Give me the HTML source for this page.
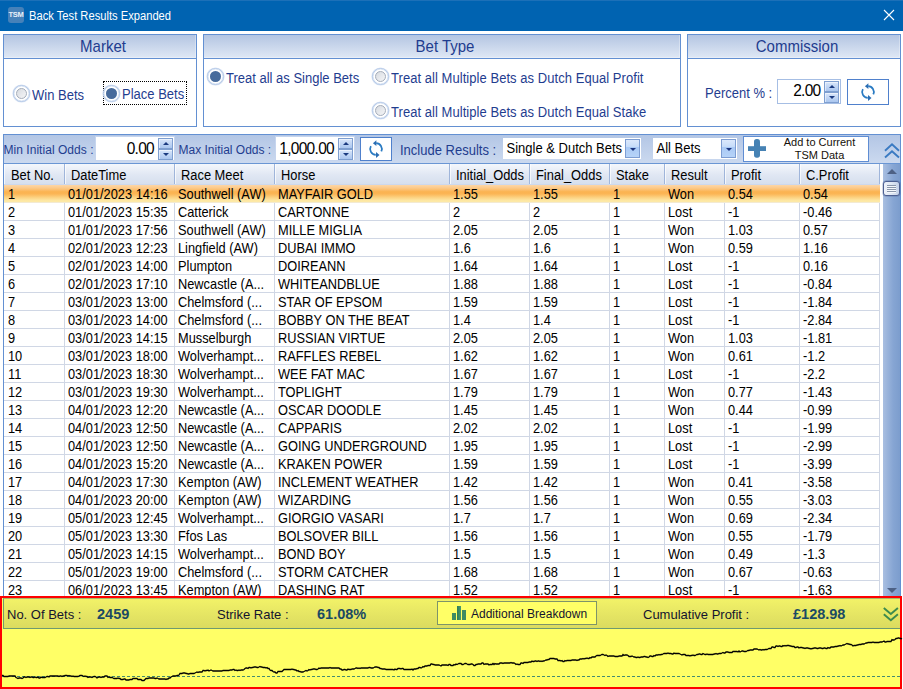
<!DOCTYPE html><html><head><meta charset="utf-8"><title>Back Test Results Expanded</title><style>
*{box-sizing:border-box;margin:0;padding:0}
html,body{width:903px;height:689px;overflow:hidden;background:#fff}
body{position:relative;font-family:"Liberation Sans",Arial,sans-serif;font-size:13px;color:#000}
.abs{position:absolute}
.t{position:absolute;white-space:nowrap;line-height:1}
#title{left:0;top:0;width:903px;height:31px;background:#0063b1}
#title .hl{left:0;top:0;width:903px;height:1px;background:#1c70b8}
#ico{left:8px;top:7px;width:16px;height:16px;border-radius:3px;background:#4681b9}
#ico span{left:0;top:4px;width:16px;text-align:center;font-size:7.5px;font-weight:bold;color:#e6eff8;letter-spacing:-0.35px}
.panel{position:absolute;border:1px solid #6390d2;background:#fff}
.ph{position:absolute;left:0;top:0;right:0;height:24px;border-bottom:1px solid #6390d2;background:linear-gradient(#b4c5e2,#dfe8f5);box-shadow:inset -1px -1px 0 rgba(255,255,255,.3)}
.ph span{transform:scaleY(1.06);transform-origin:0 82%;position:absolute;left:6px;right:0;top:4px;text-align:center;font-size:15px;line-height:16px;color:#1f3d8f;white-space:nowrap}
.blue{color:#1f3d8f}
.radio{position:absolute;width:17px;height:17px;border-radius:50%;border:1px solid #b4c9e8;background:#fff;box-shadow:0 0 0 .6px rgba(180,201,232,.55),inset 0 0 0 .6px rgba(180,201,232,.45)}
.radio i{position:absolute;left:2px;top:2px;width:11px;height:11px;border-radius:50%;border:1px solid #a4acb9;background:linear-gradient(135deg,#d6dae0,#e6e8ec 50%,#f4f5f6)}
.radio.on i{border-color:#e4e9f2;background:#fff}
.radio.on b{position:absolute;left:2px;top:2px;width:11px;height:11px;border-radius:50%;background:#476b9c}
.spin{position:absolute;background:#fff;border:1px solid #a6bee4}
.spin .v{position:absolute;right:19.5px;top:0;bottom:1px;display:flex;align-items:center;font-size:15.5px;letter-spacing:-0.7px;white-space:nowrap;transform:scaleY(1.06)}
.spin.tb .v{top:1px;bottom:0;right:20px}
.sb{position:absolute;width:15px;height:11px;border:1px solid #7f9fd0;background:linear-gradient(#d9e6fa,#aac6ef);box-shadow:inset 1px 1px 0 rgba(255,255,255,.5)}
.sb:after{content:"";position:absolute;left:3.5px;top:3px;border-left:3px solid transparent;border-right:3px solid transparent}
.sb.up:after{border-bottom:3px solid #1a3a80}
.sb.dn:after{border-top:3px solid #1a3a80}
.btn{position:absolute;background:#fff;border:1px solid #4f80cc}
.g{transform:scaleY(1.07);transform-origin:0 81%}
#tool{left:3px;top:134px;width:898px;height:463px;border:1px solid #6390d2;border-bottom:none;background:#fff}
#toolbg{left:0;top:0;width:896px;height:29px;background:linear-gradient(#b3c6e5,#cbd9ef);border-bottom:1px solid #6a96d4}
.combo{position:absolute;background:#fff;height:21px;top:3px}
.combo span{transform:scaleY(1.08);transform-origin:0 81%;position:absolute;left:3.5px;top:4px;font-size:13px;line-height:14px;white-space:nowrap}
.cb{position:absolute;right:1px;top:1px;width:15px;height:19px;border:1px solid #7d9dd2;background:linear-gradient(#dbe8fc 0%,#c6dcf9 40%,#a9c9f5 42%,#b6d3f8 100%)}
.cb:after{content:"";position:absolute;left:3.5px;top:8px;border-left:3px solid transparent;border-right:3px solid transparent;border-top:3.4px solid #1a3580}
#ghead{left:0;top:29px;width:876px;height:21px;background:linear-gradient(#f4f7fc,#e0e7f3 55%,#d6dfee);border-bottom:1px solid #cdd8ec}
.hc{position:absolute;top:0;height:20px;border-right:1px solid #9fb5da;box-shadow:inset 1px 0 0 rgba(255,255,255,.7)}
.hc span{transform:scale(.99,1.08);transform-origin:0 81%;position:absolute;left:5.5px;top:3.75px;font-size:13px;line-height:15px;white-space:nowrap}
.row{position:absolute;left:0;width:876px;height:18px;border-bottom:1px solid #d0d7e5;background:#fff}
.row.sel{background:linear-gradient(#fcd6a7 0%,#fcc988 18%,#fbb351 40%,#fbb555 52%,#fcd07f 72%,#fde6a2 90%,#fdeaa8 100%);height:17px;border-bottom:none;box-shadow:0 1px 0 #f3ead2}
.c{position:absolute;top:0;height:17px;border-right:1px solid #d0d7e5;overflow:hidden}
.row.sel .c{border-right-color:transparent}
.c span{transform:scale(.985,1.09);transform-origin:0 81%;position:absolute;left:3px;top:2.5px;font-size:13px;line-height:14px;white-space:nowrap}
#scroll{left:879px;top:29px;width:17px;height:434px;background:linear-gradient(90deg,#a9bfe1,#86a5d3 60%,#7c9dcd)}
#bot{left:0;top:596px;width:902px;height:93px;border:2px solid #f00;background:#ff6}
#bar{left:1px;top:0;width:897px;height:31px;border:1px solid #6f9a70;border-top-color:#a9b868;border-right:none;background:linear-gradient(#f2f268,#e6e664 50%,#dbdb5f)}
#bar .t{font-size:13px;color:#14142e}
#bar .b{font-weight:bold;font-size:14.5px;color:#1b4a63}
</style></head><body>
<div id="title" class="abs"><div class="abs hl"></div><div id="ico" class="abs"><span class="t">TSM</span></div><span class="t" id="ttxt" style="left:29px;top:9px;font-size:12.5px;line-height:14px;color:#fff;transform:scaleX(.894);transform-origin:0 0">Back Test Results Expanded</span><svg class="abs" style="left:883px;top:9px" width="12" height="12" viewBox="0 0 12 12"><path d="M1 1L11 11M11 1L1 11" stroke="#fff" stroke-width="1.1" fill="none"/></svg></div>
<div class="panel" style="left:3px;top:34px;width:194px;height:93px"><div class="ph"><span>Market</span></div>
<div class="radio" style="left:9px;top:50px"><i></i></div>
<span class="t blue g" id="win" style="left:28px;top:53px;font-size:13px;line-height:15px">Win Bets</span>
<div class="abs" style="left:99px;top:46px;width:84px;height:24px;border:1px dotted #000"></div>
<div class="radio on" style="left:99px;top:50px"><i></i><b></b></div>
<span class="t blue g" id="place" style="left:118px;top:52px;font-size:13px;line-height:15px">Place Bets</span>
</div>
<div class="panel" style="left:203px;top:34px;width:478px;height:93px"><div class="ph"><span>Bet Type</span></div>
<div class="radio on" style="left:3px;top:33px"><i></i><b></b></div>
<span class="t blue g" id="bt1" style="left:22px;top:36px;font-size:13px;line-height:15px">Treat all as Single Bets</span>
<div class="radio" style="left:168px;top:33px"><i></i></div>
<span class="t blue g" id="bt2" style="letter-spacing:0.05px;left:187px;top:36px;font-size:13px;line-height:15px">Treat all Multiple Bets as Dutch Equal Profit</span>
<div class="radio" style="left:168px;top:67px"><i></i></div>
<span class="t blue g" id="bt3" style="letter-spacing:0.05px;left:187px;top:70px;font-size:13px;line-height:15px">Treat all Multiple Bets as Dutch Equal Stake</span>
</div>
<div class="panel" style="left:687px;top:34px;width:214px;height:93px"><div class="ph"><span>Commission</span></div>
<span class="t blue g" id="pct" style="left:17px;top:51px;font-size:13px;line-height:15px">Percent % :</span>
<div class="spin" style="left:89px;top:44px;width:64px;height:25px"><span class="v" id="v200">2.00</span><div class="sb up" style="left:46px;top:1px"></div><div class="sb dn" style="left:46px;top:12px"></div></div>
<div class="btn" style="left:159px;top:44px;width:42px;height:26px"><svg class="abs" style="left:10.9px;top:2px" width="18" height="20" viewBox="-9 -10 18 20"><path d="M0.2 -5.85A5.85 5.85 0 0 1 5.3 2.47" fill="none" stroke="#2a7bc3" stroke-width="1.75"/><path d="M-3.1 -5.75L0.4 -8.8L0.4 -3.0Z" fill="#2a6db3"/><path d="M-5.12 -2.84A5.85 5.85 0 0 0 -0.2 5.85" fill="none" stroke="#2a7bc3" stroke-width="1.75"/><path d="M3.5 5.9L0 3.0L0 8.9Z" fill="#2a6db3"/></svg></div>
</div>
<div id="tool" class="abs"><div id="toolbg" class="abs"></div>
<span class="t blue g" id="minl" style="left:-0.5px;top:7.6px;font-size:12px;line-height:14px;letter-spacing:0.04px">Min Initial Odds :</span>
<div class="spin tb" style="left:91px;top:1px;width:80px;height:25px;border-color:#c6d5ee"><span class="v" id="v000">0.00</span><div class="sb up" style="left:62px;top:1px"></div><div class="sb dn" style="left:62px;top:12px"></div></div>
<span class="t blue g" id="maxl" style="left:174.5px;top:7.6px;font-size:12px;line-height:14px">Max Initial Odds :</span>
<div class="spin tb" style="left:271px;top:1px;width:80px;height:25px;border-color:#c6d5ee"><span class="v" id="v1000">1,000.00</span><div class="sb up" style="left:62px;top:1px"></div><div class="sb dn" style="left:62px;top:12px"></div></div>
<div class="btn" style="left:356px;top:2px;width:32px;height:24px"><svg class="abs" style="left:6.15px;top:1.06px" width="18" height="20" viewBox="-9 -10 18 20"><path d="M0.2 -5.85A5.85 5.85 0 0 1 5.3 2.47" fill="none" stroke="#2a7bc3" stroke-width="1.75"/><path d="M-3.1 -5.75L0.4 -8.8L0.4 -3.0Z" fill="#2a6db3"/><path d="M-5.12 -2.84A5.85 5.85 0 0 0 -0.2 5.85" fill="none" stroke="#2a7bc3" stroke-width="1.75"/><path d="M3.5 5.9L0 3.0L0 8.9Z" fill="#2a6db3"/></svg></div>
<span class="t blue g" id="incl" style="left:396px;top:8px;font-size:13px;line-height:15px">Include Results :</span>
<div class="combo" style="left:499px;width:138px"><span id="cb1">Single &amp; Dutch Bets</span><div class="cb"></div></div>
<div class="combo" style="left:649px;width:84px"><span id="cb2">All Bets</span><div class="cb"></div></div>
<div class="btn" style="left:739px;top:1px;width:126px;height:26px;box-shadow:none;border-color:#5f8dd3"><svg class="abs" style="left:0;top:0" width="26" height="24" viewBox="0 0 26 24"><rect x="10" y="2.1" width="6" height="18.6" rx="2.6" fill="#4682b4"/><rect x="4" y="9.2" width="18" height="4.8" fill="#4682b4"/></svg><span class="t" id="add1" style="left:26.5px;width:98px;text-align:center;top:-1.1px;font-size:11px;line-height:12px;color:#15100a">Add to Current</span><span class="t" id="add2" style="left:26.5px;width:98px;text-align:center;top:11.7px;font-size:11px;line-height:12px;color:#15100a">TSM Data</span></div>
<svg class="abs" style="left:879px;top:7px" width="18" height="17" viewBox="0 0 18 17"><path d="M2 8.7L9 2.4L16 8.7M2 15.5L9 9.2L16 15.5" fill="none" stroke="#3a7ac2" stroke-width="1.9"/></svg>
<div id="ghead" class="abs">
<div class="hc" style="left:0px;width:61px"><span style="left:7px">Bet No.</span></div>
<div class="hc" style="left:61px;width:110px"><span>DateTime</span></div>
<div class="hc" style="left:171px;width:100px"><span>Race Meet</span></div>
<div class="hc" style="left:271px;width:175px"><span>Horse</span></div>
<div class="hc" style="left:446px;width:80px"><span>Initial_Odds</span></div>
<div class="hc" style="left:526px;width:80px"><span>Final_Odds</span></div>
<div class="hc" style="left:606px;width:55px"><span>Stake</span></div>
<div class="hc" style="left:661px;width:60px"><span>Result</span></div>
<div class="hc" style="left:721px;width:75px"><span>Profit</span></div>
<div class="hc" style="left:796px;width:80px"><span>C.Profit</span></div>
</div>
<div class="row sel" style="top:50px">
<div class="c" style="left:0px;width:61px"><span style="left:3.6px">1</span></div>
<div class="c" style="left:61px;width:110px"><span>01/01/2023 14:16</span></div>
<div class="c" style="left:171px;width:100px"><span>Southwell (AW)</span></div>
<div class="c" style="left:271px;width:175px"><span>MAYFAIR GOLD</span></div>
<div class="c" style="left:446px;width:80px"><span>1.55</span></div>
<div class="c" style="left:526px;width:80px"><span>1.55</span></div>
<div class="c" style="left:606px;width:55px"><span>1</span></div>
<div class="c" style="left:661px;width:60px"><span>Won</span></div>
<div class="c" style="left:721px;width:75px"><span>0.54</span></div>
<div class="c" style="left:796px;width:80px"><span>0.54</span></div>
</div>
<div class="row" style="top:68px">
<div class="c" style="left:0px;width:61px"><span style="left:3.6px">2</span></div>
<div class="c" style="left:61px;width:110px"><span>01/01/2023 15:35</span></div>
<div class="c" style="left:171px;width:100px"><span>Catterick</span></div>
<div class="c" style="left:271px;width:175px"><span>CARTONNE</span></div>
<div class="c" style="left:446px;width:80px"><span>2</span></div>
<div class="c" style="left:526px;width:80px"><span>2</span></div>
<div class="c" style="left:606px;width:55px"><span>1</span></div>
<div class="c" style="left:661px;width:60px"><span>Lost</span></div>
<div class="c" style="left:721px;width:75px"><span>-1</span></div>
<div class="c" style="left:796px;width:80px"><span>-0.46</span></div>
</div>
<div class="row" style="top:86px">
<div class="c" style="left:0px;width:61px"><span style="left:3.6px">3</span></div>
<div class="c" style="left:61px;width:110px"><span>01/01/2023 17:56</span></div>
<div class="c" style="left:171px;width:100px"><span>Southwell (AW)</span></div>
<div class="c" style="left:271px;width:175px"><span>MILLE MIGLIA</span></div>
<div class="c" style="left:446px;width:80px"><span>2.05</span></div>
<div class="c" style="left:526px;width:80px"><span>2.05</span></div>
<div class="c" style="left:606px;width:55px"><span>1</span></div>
<div class="c" style="left:661px;width:60px"><span>Won</span></div>
<div class="c" style="left:721px;width:75px"><span>1.03</span></div>
<div class="c" style="left:796px;width:80px"><span>0.57</span></div>
</div>
<div class="row" style="top:104px">
<div class="c" style="left:0px;width:61px"><span style="left:3.6px">4</span></div>
<div class="c" style="left:61px;width:110px"><span>02/01/2023 12:23</span></div>
<div class="c" style="left:171px;width:100px"><span>Lingfield (AW)</span></div>
<div class="c" style="left:271px;width:175px"><span>DUBAI IMMO</span></div>
<div class="c" style="left:446px;width:80px"><span>1.6</span></div>
<div class="c" style="left:526px;width:80px"><span>1.6</span></div>
<div class="c" style="left:606px;width:55px"><span>1</span></div>
<div class="c" style="left:661px;width:60px"><span>Won</span></div>
<div class="c" style="left:721px;width:75px"><span>0.59</span></div>
<div class="c" style="left:796px;width:80px"><span>1.16</span></div>
</div>
<div class="row" style="top:122px">
<div class="c" style="left:0px;width:61px"><span style="left:3.6px">5</span></div>
<div class="c" style="left:61px;width:110px"><span>02/01/2023 14:00</span></div>
<div class="c" style="left:171px;width:100px"><span>Plumpton</span></div>
<div class="c" style="left:271px;width:175px"><span>DOIREANN</span></div>
<div class="c" style="left:446px;width:80px"><span>1.64</span></div>
<div class="c" style="left:526px;width:80px"><span>1.64</span></div>
<div class="c" style="left:606px;width:55px"><span>1</span></div>
<div class="c" style="left:661px;width:60px"><span>Lost</span></div>
<div class="c" style="left:721px;width:75px"><span>-1</span></div>
<div class="c" style="left:796px;width:80px"><span>0.16</span></div>
</div>
<div class="row" style="top:140px">
<div class="c" style="left:0px;width:61px"><span style="left:3.6px">6</span></div>
<div class="c" style="left:61px;width:110px"><span>02/01/2023 17:10</span></div>
<div class="c" style="left:171px;width:100px"><span>Newcastle (A...</span></div>
<div class="c" style="left:271px;width:175px"><span>WHITEANDBLUE</span></div>
<div class="c" style="left:446px;width:80px"><span>1.88</span></div>
<div class="c" style="left:526px;width:80px"><span>1.88</span></div>
<div class="c" style="left:606px;width:55px"><span>1</span></div>
<div class="c" style="left:661px;width:60px"><span>Lost</span></div>
<div class="c" style="left:721px;width:75px"><span>-1</span></div>
<div class="c" style="left:796px;width:80px"><span>-0.84</span></div>
</div>
<div class="row" style="top:158px">
<div class="c" style="left:0px;width:61px"><span style="left:3.6px">7</span></div>
<div class="c" style="left:61px;width:110px"><span>03/01/2023 13:00</span></div>
<div class="c" style="left:171px;width:100px"><span>Chelmsford (...</span></div>
<div class="c" style="left:271px;width:175px"><span>STAR OF EPSOM</span></div>
<div class="c" style="left:446px;width:80px"><span>1.59</span></div>
<div class="c" style="left:526px;width:80px"><span>1.59</span></div>
<div class="c" style="left:606px;width:55px"><span>1</span></div>
<div class="c" style="left:661px;width:60px"><span>Lost</span></div>
<div class="c" style="left:721px;width:75px"><span>-1</span></div>
<div class="c" style="left:796px;width:80px"><span>-1.84</span></div>
</div>
<div class="row" style="top:176px">
<div class="c" style="left:0px;width:61px"><span style="left:3.6px">8</span></div>
<div class="c" style="left:61px;width:110px"><span>03/01/2023 14:00</span></div>
<div class="c" style="left:171px;width:100px"><span>Chelmsford (...</span></div>
<div class="c" style="left:271px;width:175px"><span>BOBBY ON THE BEAT</span></div>
<div class="c" style="left:446px;width:80px"><span>1.4</span></div>
<div class="c" style="left:526px;width:80px"><span>1.4</span></div>
<div class="c" style="left:606px;width:55px"><span>1</span></div>
<div class="c" style="left:661px;width:60px"><span>Lost</span></div>
<div class="c" style="left:721px;width:75px"><span>-1</span></div>
<div class="c" style="left:796px;width:80px"><span>-2.84</span></div>
</div>
<div class="row" style="top:194px">
<div class="c" style="left:0px;width:61px"><span style="left:3.6px">9</span></div>
<div class="c" style="left:61px;width:110px"><span>03/01/2023 14:15</span></div>
<div class="c" style="left:171px;width:100px"><span>Musselburgh</span></div>
<div class="c" style="left:271px;width:175px"><span>RUSSIAN VIRTUE</span></div>
<div class="c" style="left:446px;width:80px"><span>2.05</span></div>
<div class="c" style="left:526px;width:80px"><span>2.05</span></div>
<div class="c" style="left:606px;width:55px"><span>1</span></div>
<div class="c" style="left:661px;width:60px"><span>Won</span></div>
<div class="c" style="left:721px;width:75px"><span>1.03</span></div>
<div class="c" style="left:796px;width:80px"><span>-1.81</span></div>
</div>
<div class="row" style="top:212px">
<div class="c" style="left:0px;width:61px"><span style="left:3.6px">10</span></div>
<div class="c" style="left:61px;width:110px"><span>03/01/2023 18:00</span></div>
<div class="c" style="left:171px;width:100px"><span>Wolverhampt...</span></div>
<div class="c" style="left:271px;width:175px"><span>RAFFLES REBEL</span></div>
<div class="c" style="left:446px;width:80px"><span>1.62</span></div>
<div class="c" style="left:526px;width:80px"><span>1.62</span></div>
<div class="c" style="left:606px;width:55px"><span>1</span></div>
<div class="c" style="left:661px;width:60px"><span>Won</span></div>
<div class="c" style="left:721px;width:75px"><span>0.61</span></div>
<div class="c" style="left:796px;width:80px"><span>-1.2</span></div>
</div>
<div class="row" style="top:230px">
<div class="c" style="left:0px;width:61px"><span style="left:3.6px">11</span></div>
<div class="c" style="left:61px;width:110px"><span>03/01/2023 18:30</span></div>
<div class="c" style="left:171px;width:100px"><span>Wolverhampt...</span></div>
<div class="c" style="left:271px;width:175px"><span>WEE FAT MAC</span></div>
<div class="c" style="left:446px;width:80px"><span>1.67</span></div>
<div class="c" style="left:526px;width:80px"><span>1.67</span></div>
<div class="c" style="left:606px;width:55px"><span>1</span></div>
<div class="c" style="left:661px;width:60px"><span>Lost</span></div>
<div class="c" style="left:721px;width:75px"><span>-1</span></div>
<div class="c" style="left:796px;width:80px"><span>-2.2</span></div>
</div>
<div class="row" style="top:248px">
<div class="c" style="left:0px;width:61px"><span style="left:3.6px">12</span></div>
<div class="c" style="left:61px;width:110px"><span>03/01/2023 19:30</span></div>
<div class="c" style="left:171px;width:100px"><span>Wolverhampt...</span></div>
<div class="c" style="left:271px;width:175px"><span>TOPLIGHT</span></div>
<div class="c" style="left:446px;width:80px"><span>1.79</span></div>
<div class="c" style="left:526px;width:80px"><span>1.79</span></div>
<div class="c" style="left:606px;width:55px"><span>1</span></div>
<div class="c" style="left:661px;width:60px"><span>Won</span></div>
<div class="c" style="left:721px;width:75px"><span>0.77</span></div>
<div class="c" style="left:796px;width:80px"><span>-1.43</span></div>
</div>
<div class="row" style="top:266px">
<div class="c" style="left:0px;width:61px"><span style="left:3.6px">13</span></div>
<div class="c" style="left:61px;width:110px"><span>04/01/2023 12:20</span></div>
<div class="c" style="left:171px;width:100px"><span>Newcastle (A...</span></div>
<div class="c" style="left:271px;width:175px"><span>OSCAR DOODLE</span></div>
<div class="c" style="left:446px;width:80px"><span>1.45</span></div>
<div class="c" style="left:526px;width:80px"><span>1.45</span></div>
<div class="c" style="left:606px;width:55px"><span>1</span></div>
<div class="c" style="left:661px;width:60px"><span>Won</span></div>
<div class="c" style="left:721px;width:75px"><span>0.44</span></div>
<div class="c" style="left:796px;width:80px"><span>-0.99</span></div>
</div>
<div class="row" style="top:284px">
<div class="c" style="left:0px;width:61px"><span style="left:3.6px">14</span></div>
<div class="c" style="left:61px;width:110px"><span>04/01/2023 12:50</span></div>
<div class="c" style="left:171px;width:100px"><span>Newcastle (A...</span></div>
<div class="c" style="left:271px;width:175px"><span>CAPPARIS</span></div>
<div class="c" style="left:446px;width:80px"><span>2.02</span></div>
<div class="c" style="left:526px;width:80px"><span>2.02</span></div>
<div class="c" style="left:606px;width:55px"><span>1</span></div>
<div class="c" style="left:661px;width:60px"><span>Lost</span></div>
<div class="c" style="left:721px;width:75px"><span>-1</span></div>
<div class="c" style="left:796px;width:80px"><span>-1.99</span></div>
</div>
<div class="row" style="top:302px">
<div class="c" style="left:0px;width:61px"><span style="left:3.6px">15</span></div>
<div class="c" style="left:61px;width:110px"><span>04/01/2023 12:50</span></div>
<div class="c" style="left:171px;width:100px"><span>Newcastle (A...</span></div>
<div class="c" style="left:271px;width:175px"><span>GOING UNDERGROUND</span></div>
<div class="c" style="left:446px;width:80px"><span>1.95</span></div>
<div class="c" style="left:526px;width:80px"><span>1.95</span></div>
<div class="c" style="left:606px;width:55px"><span>1</span></div>
<div class="c" style="left:661px;width:60px"><span>Lost</span></div>
<div class="c" style="left:721px;width:75px"><span>-1</span></div>
<div class="c" style="left:796px;width:80px"><span>-2.99</span></div>
</div>
<div class="row" style="top:320px">
<div class="c" style="left:0px;width:61px"><span style="left:3.6px">16</span></div>
<div class="c" style="left:61px;width:110px"><span>04/01/2023 15:20</span></div>
<div class="c" style="left:171px;width:100px"><span>Newcastle (A...</span></div>
<div class="c" style="left:271px;width:175px"><span>KRAKEN POWER</span></div>
<div class="c" style="left:446px;width:80px"><span>1.59</span></div>
<div class="c" style="left:526px;width:80px"><span>1.59</span></div>
<div class="c" style="left:606px;width:55px"><span>1</span></div>
<div class="c" style="left:661px;width:60px"><span>Lost</span></div>
<div class="c" style="left:721px;width:75px"><span>-1</span></div>
<div class="c" style="left:796px;width:80px"><span>-3.99</span></div>
</div>
<div class="row" style="top:338px">
<div class="c" style="left:0px;width:61px"><span style="left:3.6px">17</span></div>
<div class="c" style="left:61px;width:110px"><span>04/01/2023 17:30</span></div>
<div class="c" style="left:171px;width:100px"><span>Kempton (AW)</span></div>
<div class="c" style="left:271px;width:175px"><span>INCLEMENT WEATHER</span></div>
<div class="c" style="left:446px;width:80px"><span>1.42</span></div>
<div class="c" style="left:526px;width:80px"><span>1.42</span></div>
<div class="c" style="left:606px;width:55px"><span>1</span></div>
<div class="c" style="left:661px;width:60px"><span>Won</span></div>
<div class="c" style="left:721px;width:75px"><span>0.41</span></div>
<div class="c" style="left:796px;width:80px"><span>-3.58</span></div>
</div>
<div class="row" style="top:356px">
<div class="c" style="left:0px;width:61px"><span style="left:3.6px">18</span></div>
<div class="c" style="left:61px;width:110px"><span>04/01/2023 20:00</span></div>
<div class="c" style="left:171px;width:100px"><span>Kempton (AW)</span></div>
<div class="c" style="left:271px;width:175px"><span>WIZARDING</span></div>
<div class="c" style="left:446px;width:80px"><span>1.56</span></div>
<div class="c" style="left:526px;width:80px"><span>1.56</span></div>
<div class="c" style="left:606px;width:55px"><span>1</span></div>
<div class="c" style="left:661px;width:60px"><span>Won</span></div>
<div class="c" style="left:721px;width:75px"><span>0.55</span></div>
<div class="c" style="left:796px;width:80px"><span>-3.03</span></div>
</div>
<div class="row" style="top:374px">
<div class="c" style="left:0px;width:61px"><span style="left:3.6px">19</span></div>
<div class="c" style="left:61px;width:110px"><span>05/01/2023 12:45</span></div>
<div class="c" style="left:171px;width:100px"><span>Wolverhampt...</span></div>
<div class="c" style="left:271px;width:175px"><span>GIORGIO VASARI</span></div>
<div class="c" style="left:446px;width:80px"><span>1.7</span></div>
<div class="c" style="left:526px;width:80px"><span>1.7</span></div>
<div class="c" style="left:606px;width:55px"><span>1</span></div>
<div class="c" style="left:661px;width:60px"><span>Won</span></div>
<div class="c" style="left:721px;width:75px"><span>0.69</span></div>
<div class="c" style="left:796px;width:80px"><span>-2.34</span></div>
</div>
<div class="row" style="top:392px">
<div class="c" style="left:0px;width:61px"><span style="left:3.6px">20</span></div>
<div class="c" style="left:61px;width:110px"><span>05/01/2023 13:30</span></div>
<div class="c" style="left:171px;width:100px"><span>Ffos Las</span></div>
<div class="c" style="left:271px;width:175px"><span>BOLSOVER BILL</span></div>
<div class="c" style="left:446px;width:80px"><span>1.56</span></div>
<div class="c" style="left:526px;width:80px"><span>1.56</span></div>
<div class="c" style="left:606px;width:55px"><span>1</span></div>
<div class="c" style="left:661px;width:60px"><span>Won</span></div>
<div class="c" style="left:721px;width:75px"><span>0.55</span></div>
<div class="c" style="left:796px;width:80px"><span>-1.79</span></div>
</div>
<div class="row" style="top:410px">
<div class="c" style="left:0px;width:61px"><span style="left:3.6px">21</span></div>
<div class="c" style="left:61px;width:110px"><span>05/01/2023 14:15</span></div>
<div class="c" style="left:171px;width:100px"><span>Wolverhampt...</span></div>
<div class="c" style="left:271px;width:175px"><span>BOND BOY</span></div>
<div class="c" style="left:446px;width:80px"><span>1.5</span></div>
<div class="c" style="left:526px;width:80px"><span>1.5</span></div>
<div class="c" style="left:606px;width:55px"><span>1</span></div>
<div class="c" style="left:661px;width:60px"><span>Won</span></div>
<div class="c" style="left:721px;width:75px"><span>0.49</span></div>
<div class="c" style="left:796px;width:80px"><span>-1.3</span></div>
</div>
<div class="row" style="top:428px">
<div class="c" style="left:0px;width:61px"><span style="left:3.6px">22</span></div>
<div class="c" style="left:61px;width:110px"><span>05/01/2023 19:00</span></div>
<div class="c" style="left:171px;width:100px"><span>Chelmsford (...</span></div>
<div class="c" style="left:271px;width:175px"><span>STORM CATCHER</span></div>
<div class="c" style="left:446px;width:80px"><span>1.68</span></div>
<div class="c" style="left:526px;width:80px"><span>1.68</span></div>
<div class="c" style="left:606px;width:55px"><span>1</span></div>
<div class="c" style="left:661px;width:60px"><span>Won</span></div>
<div class="c" style="left:721px;width:75px"><span>0.67</span></div>
<div class="c" style="left:796px;width:80px"><span>-0.63</span></div>
</div>
<div class="row" style="top:446px">
<div class="c" style="left:0px;width:61px"><span style="left:3.6px">23</span></div>
<div class="c" style="left:61px;width:110px"><span>06/01/2023 13:45</span></div>
<div class="c" style="left:171px;width:100px"><span>Kempton (AW)</span></div>
<div class="c" style="left:271px;width:175px"><span>DASHING RAT</span></div>
<div class="c" style="left:446px;width:80px"><span>1.52</span></div>
<div class="c" style="left:526px;width:80px"><span>1.52</span></div>
<div class="c" style="left:606px;width:55px"><span>1</span></div>
<div class="c" style="left:661px;width:60px"><span>Lost</span></div>
<div class="c" style="left:721px;width:75px"><span>-1</span></div>
<div class="c" style="left:796px;width:80px"><span>-1.63</span></div>
</div>
<div id="scroll" class="abs"><svg class="abs" style="left:4px;top:5px" width="10" height="5" viewBox="0 0 10 5"><path d="M0 5L5 0L10 5Z" fill="#4d6185"/></svg><div class="abs" style="left:0px;top:17px;width:17px;height:15px;border:1px solid #4c5f92;border-radius:3px;box-shadow:0 0 0 .5px rgba(76,95,146,.5);background:linear-gradient(90deg,#eef2fa,#dfe7f3 50%,#c4d1e8)"><div class="abs" style="left:3px;top:3px;width:9px;height:1px;background:#8a96ab;box-shadow:0 1px 0 #f4f7fb,0 2px 0 #8a96ab,0 3px 0 #f4f7fb,0 4px 0 #8a96ab,0 5px 0 #f4f7fb,0 6px 0 #8a96ab,0 7px 0 #f4f7fb"></div></div><svg class="abs" style="left:4px;top:424px" width="10" height="5" viewBox="0 0 10 5"><path d="M0 0L5 5L10 0Z" fill="#4d6185"/></svg></div>
</div>
<div id="bot" class="abs"><div id="bar" class="abs"><span class="t" id="nob" style="left:3px;top:8px;line-height:15px">No. Of Bets :</span><span class="t b" id="nobv" style="left:93px;top:7px;line-height:16px">2459</span><span class="t" id="sr" style="left:213px;top:8px;line-height:15px">Strike Rate :</span><span class="t b" id="srv" style="left:313px;top:7px;line-height:16px">61.08%</span><div class="abs" style="left:433px;top:2px;width:160px;height:24px;border:1px solid #7e9469;background:#ff6"><div class="abs" style="left:14px;top:11px;width:4px;height:7px;background:#3f8c62"></div><div class="abs" style="left:19px;top:4px;width:4px;height:14px;background:linear-gradient(90deg,#2f7c55,#4b9a70)"></div><div class="abs" style="left:24px;top:8px;width:4px;height:10px;background:#3f8c62"></div><span class="t" id="addb" style="left:33px;top:5px;font-size:12px;line-height:14px;color:#14142e">Additional Breakdown</span></div><span class="t" id="cp" style="left:639px;top:8px;line-height:15px">Cumulative Profit :</span><span class="t b" id="cpv" style="left:789px;top:7px;line-height:16px">£128.98</span><svg class="abs" style="left:878px;top:6.5px" width="18" height="17" viewBox="0 0 18 17"><path d="M1.8 2L8.85 8L15.9 2M1.8 8.3L8.85 14.3L15.9 8.3" fill="none" stroke="#3c8a4e" stroke-width="1.9"/></svg></div>
</div>
<svg class="abs" style="left:0;top:596px" width="903" height="93" viewBox="0 0 903 93"><path d="M2 80.5H900" stroke="#458c70" stroke-width="1" stroke-dasharray="3 2" fill="none"/><polyline points="2.0,79.5 3.0,79.5 4.0,80.5 5.0,80.5 6.0,80.5 7.0,80.5 8.0,80.5 9.0,80.0 10.0,80.0 11.0,80.0 12.0,80.0 13.0,80.0 14.0,80.0 15.0,80.0 16.0,81.5 17.0,82.0 18.0,82.5 19.0,82.0 20.0,82.0 21.0,82.0 22.0,82.5 23.0,82.0 24.0,81.0 25.0,81.0 26.0,81.5 27.0,81.0 28.0,81.0 29.0,81.0 30.0,81.5 31.0,81.0 32.0,81.0 33.0,81.5 34.0,81.5 35.0,81.0 36.0,81.5 37.0,81.5 38.0,81.0 39.0,82.0 40.0,82.0 41.0,81.0 42.0,81.5 43.0,81.5 44.0,81.5 45.0,81.5 46.0,81.0 47.0,80.5 48.0,80.5 49.0,81.0 50.0,80.0 51.0,80.0 52.0,80.0 53.0,80.0 54.0,80.0 55.0,80.0 56.0,80.0 57.0,80.0 58.0,80.0 59.0,80.5 60.0,80.0 61.0,80.0 62.0,80.5 63.0,80.0 64.0,80.0 65.0,79.5 66.0,79.5 67.0,79.5 68.0,80.0 69.0,79.5 70.0,80.0 71.0,80.0 72.0,80.5 73.0,80.0 74.0,80.5 75.0,80.5 76.0,80.5 77.0,80.5 78.0,80.5 79.0,80.0 80.0,79.5 81.0,79.5 82.0,79.5 83.0,80.0 84.0,80.5 85.0,80.0 86.0,80.5 87.0,80.5 88.0,81.5 89.0,81.0 90.0,81.0 91.0,81.0 92.0,81.5 93.0,81.0 94.0,80.5 95.0,80.5 96.0,81.0 97.0,82.0 98.0,81.5 99.0,81.0 100.0,81.0 101.0,81.5 102.0,81.0 103.0,81.0 104.0,81.0 105.0,80.0 106.0,80.0 107.0,80.0 108.0,81.5 109.0,81.0 110.0,81.5 111.0,81.5 112.0,81.5 113.0,82.0 114.0,82.5 115.0,82.5 116.0,82.5 117.0,82.5 118.0,82.0 119.0,82.5 120.0,82.5 121.0,83.5 122.0,83.5 123.0,83.5 124.0,83.0 125.0,83.0 126.0,84.0 127.0,84.0 128.0,84.0 129.0,84.0 130.0,83.5 131.0,83.5 132.0,83.5 133.0,82.5 134.0,82.5 135.0,82.5 136.0,82.5 137.0,82.5 138.0,83.5 139.0,83.5 140.0,83.5 141.0,83.5 142.0,84.5 143.0,84.5 144.0,84.5 145.0,83.5 146.0,82.5 147.0,82.5 148.0,82.5 149.0,82.0 150.0,82.0 151.0,82.0 152.0,82.0 153.0,82.0 154.0,82.0 155.0,82.5 156.0,82.5 157.0,82.0 158.0,82.5 159.0,83.0 160.0,83.0 161.0,83.0 162.0,83.0 163.0,83.0 164.0,83.0 165.0,83.0 166.0,83.5 167.0,83.0 168.0,83.0 169.0,82.0 170.0,82.0 171.0,81.0 172.0,80.5 173.0,80.0 174.0,80.0 175.0,80.0 176.0,80.0 177.0,79.5 178.0,79.5 179.0,79.0 180.0,77.5 181.0,77.5 182.0,77.5 183.0,77.0 184.0,77.0 185.0,77.0 186.0,77.5 187.0,77.5 188.0,78.0 189.0,78.0 190.0,77.5 191.0,77.5 192.0,77.5 193.0,77.5 194.0,77.5 195.0,77.0 196.0,76.5 197.0,76.0 198.0,76.5 199.0,76.0 200.0,76.0 201.0,76.0 202.0,76.0 203.0,74.5 204.0,74.5 205.0,75.0 206.0,74.5 207.0,74.5 208.0,74.0 209.0,75.0 210.0,74.5 211.0,74.0 212.0,74.5 213.0,75.0 214.0,75.0 215.0,75.0 216.0,75.0 217.0,75.0 218.0,75.0 219.0,75.0 220.0,75.0 221.0,75.0 222.0,75.0 223.0,74.5 224.0,74.5 225.0,74.5 226.0,74.5 227.0,74.5 228.0,74.5 229.0,74.5 230.0,74.0 231.0,74.0 232.0,74.0 233.0,73.5 234.0,73.5 235.0,74.5 236.0,74.0 237.0,74.5 238.0,74.5 239.0,74.0 240.0,74.5 241.0,74.0 242.0,74.0 243.0,74.0 244.0,73.5 245.0,72.5 246.0,72.0 247.0,72.0 248.0,72.5 249.0,71.5 250.0,71.5 251.0,72.0 252.0,71.5 253.0,71.5 254.0,71.0 255.0,71.0 256.0,71.0 257.0,71.5 258.0,71.5 259.0,71.0 260.0,70.5 261.0,71.0 262.0,71.0 263.0,71.5 264.0,71.5 265.0,71.5 266.0,72.0 267.0,71.5 268.0,72.5 269.0,72.5 270.0,74.0 271.0,74.5 272.0,74.5 273.0,75.5 274.0,76.0 275.0,76.0 276.0,77.0 277.0,77.0 278.0,75.5 279.0,75.5 280.0,75.5 281.0,75.5 282.0,75.5 283.0,74.5 284.0,73.5 285.0,73.5 286.0,73.5 287.0,73.5 288.0,73.5 289.0,73.5 290.0,73.5 291.0,73.5 292.0,73.0 293.0,73.5 294.0,73.5 295.0,74.0 296.0,74.0 297.0,75.0 298.0,74.5 299.0,75.5 300.0,75.5 301.0,76.0 302.0,76.0 303.0,76.0 304.0,75.5 305.0,75.0 306.0,74.5 307.0,75.0 308.0,74.5 309.0,73.5 310.0,74.0 311.0,73.5 312.0,73.5 313.0,73.0 314.0,73.0 315.0,73.0 316.0,73.5 317.0,73.5 318.0,73.0 319.0,72.0 320.0,72.5 321.0,72.0 322.0,72.0 323.0,72.0 324.0,72.0 325.0,72.0 326.0,72.0 327.0,72.0 328.0,72.0 329.0,72.0 330.0,71.5 331.0,72.0 332.0,72.0 333.0,72.0 334.0,72.0 335.0,72.0 336.0,72.0 337.0,72.0 338.0,72.0 339.0,72.0 340.0,73.0 341.0,73.0 342.0,74.0 343.0,74.0 344.0,73.5 345.0,73.5 346.0,74.0 347.0,74.0 348.0,73.0 349.0,73.5 350.0,73.5 351.0,73.5 352.0,73.0 353.0,73.0 354.0,73.0 355.0,72.5 356.0,72.0 357.0,72.0 358.0,72.5 359.0,72.0 360.0,72.5 361.0,72.0 362.0,72.0 363.0,72.0 364.0,72.0 365.0,72.0 366.0,72.0 367.0,72.0 368.0,72.0 369.0,71.5 370.0,71.5 371.0,72.0 372.0,72.0 373.0,72.0 374.0,71.5 375.0,71.0 376.0,71.0 377.0,71.0 378.0,71.5 379.0,71.5 380.0,72.5 381.0,72.5 382.0,73.0 383.0,73.0 384.0,73.0 385.0,73.0 386.0,73.5 387.0,73.5 388.0,73.5 389.0,73.5 390.0,73.5 391.0,73.5 392.0,73.5 393.0,73.5 394.0,74.0 395.0,73.0 396.0,73.5 397.0,73.5 398.0,72.5 399.0,72.5 400.0,72.5 401.0,73.0 402.0,72.5 403.0,72.5 404.0,73.5 405.0,73.5 406.0,73.5 407.0,73.5 408.0,73.5 409.0,73.5 410.0,73.5 411.0,73.5 412.0,73.0 413.0,74.0 414.0,73.0 415.0,73.0 416.0,73.0 417.0,72.5 418.0,72.5 419.0,71.5 420.0,71.5 421.0,72.0 422.0,71.5 423.0,70.5 424.0,71.0 425.0,70.0 426.0,70.0 427.0,70.0 428.0,69.5 429.0,69.5 430.0,69.5 431.0,68.0 432.0,68.0 433.0,68.5 434.0,68.5 435.0,69.0 436.0,69.0 437.0,69.0 438.0,69.0 439.0,69.0 440.0,69.5 441.0,70.0 442.0,69.0 443.0,69.0 444.0,69.0 445.0,69.0 446.0,69.0 447.0,69.0 448.0,69.5 449.0,68.5 450.0,68.5 451.0,69.5 452.0,69.5 453.0,69.5 454.0,68.5 455.0,69.0 456.0,68.0 457.0,68.5 458.0,68.0 459.0,67.5 460.0,67.5 461.0,67.5 462.0,68.5 463.0,68.5 464.0,68.0 465.0,67.5 466.0,67.5 467.0,68.0 468.0,68.5 469.0,68.5 470.0,68.5 471.0,68.0 472.0,68.0 473.0,68.5 474.0,69.5 475.0,69.5 476.0,68.5 477.0,68.5 478.0,68.0 479.0,68.0 480.0,68.0 481.0,68.0 482.0,67.0 483.0,67.0 484.0,68.5 485.0,68.0 486.0,68.0 487.0,68.0 488.0,68.0 489.0,69.0 490.0,68.5 491.0,68.5 492.0,68.5 493.0,67.5 494.0,68.5 495.0,67.5 496.0,68.0 497.0,68.0 498.0,68.0 499.0,68.0 500.0,67.0 501.0,67.0 502.0,67.0 503.0,67.5 504.0,67.0 505.0,67.0 506.0,67.0 507.0,67.0 508.0,67.0 509.0,67.0 510.0,67.0 511.0,66.5 512.0,67.0 513.0,67.0 514.0,67.0 515.0,67.5 516.0,68.5 517.0,68.0 518.0,68.5 519.0,68.5 520.0,68.5 521.0,67.0 522.0,67.0 523.0,67.5 524.0,66.5 525.0,66.5 526.0,66.5 527.0,66.5 528.0,66.5 529.0,66.0 530.0,66.0 531.0,66.0 532.0,65.0 533.0,65.5 534.0,65.5 535.0,65.0 536.0,65.0 537.0,65.5 538.0,65.0 539.0,65.0 540.0,65.5 541.0,65.0 542.0,65.5 543.0,65.0 544.0,65.0 545.0,64.5 546.0,64.0 547.0,64.0 548.0,63.5 549.0,63.5 550.0,62.5 551.0,62.5 552.0,62.5 553.0,62.5 554.0,62.5 555.0,63.0 556.0,63.0 557.0,63.0 558.0,64.5 559.0,64.5 560.0,64.5 561.0,65.0 562.0,64.5 563.0,65.5 564.0,65.5 565.0,64.5 566.0,65.0 567.0,64.5 568.0,64.5 569.0,64.5 570.0,64.5 571.0,64.5 572.0,64.0 573.0,64.0 574.0,64.0 575.0,64.0 576.0,64.0 577.0,64.5 578.0,64.0 579.0,64.0 580.0,63.0 581.0,63.0 582.0,63.0 583.0,62.5 584.0,63.0 585.0,62.5 586.0,62.5 587.0,62.0 588.0,62.5 589.0,62.5 590.0,61.5 591.0,62.0 592.0,61.0 593.0,61.0 594.0,61.0 595.0,61.0 596.0,60.0 597.0,59.5 598.0,59.5 599.0,59.5 600.0,59.5 601.0,59.0 602.0,58.5 603.0,58.5 604.0,59.0 605.0,59.5 606.0,59.0 607.0,59.5 608.0,60.5 609.0,60.0 610.0,60.0 611.0,60.0 612.0,60.0 613.0,60.0 614.0,60.0 615.0,60.5 616.0,60.5 617.0,60.5 618.0,60.5 619.0,60.0 620.0,60.0 621.0,60.0 622.0,60.0 623.0,58.5 624.0,59.5 625.0,59.0 626.0,59.0 627.0,59.0 628.0,59.5 629.0,60.5 630.0,60.5 631.0,60.5 632.0,60.0 633.0,60.5 634.0,61.0 635.0,61.0 636.0,61.5 637.0,61.5 638.0,61.0 639.0,61.5 640.0,61.5 641.0,61.0 642.0,61.0 643.0,61.0 644.0,60.5 645.0,60.5 646.0,61.0 647.0,61.0 648.0,61.5 649.0,61.0 650.0,60.0 651.0,60.0 652.0,60.5 653.0,60.5 654.0,59.5 655.0,60.0 656.0,59.0 657.0,59.0 658.0,59.0 659.0,58.5 660.0,59.0 661.0,58.5 662.0,58.5 663.0,58.0 664.0,57.5 665.0,57.5 666.0,57.5 667.0,57.5 668.0,57.0 669.0,57.5 670.0,57.5 671.0,57.5 672.0,58.0 673.0,58.0 674.0,57.0 675.0,57.5 676.0,57.5 677.0,57.5 678.0,57.5 679.0,57.5 680.0,58.0 681.0,58.5 682.0,59.0 683.0,58.5 684.0,58.5 685.0,58.5 686.0,59.5 687.0,59.5 688.0,59.5 689.0,59.5 690.0,60.0 691.0,59.5 692.0,59.5 693.0,59.0 694.0,59.5 695.0,59.5 696.0,59.0 697.0,58.5 698.0,58.5 699.0,58.0 700.0,58.0 701.0,58.5 702.0,58.5 703.0,57.5 704.0,58.0 705.0,58.5 706.0,58.5 707.0,58.0 708.0,58.5 709.0,58.5 710.0,58.5 711.0,58.5 712.0,58.5 713.0,58.5 714.0,58.0 715.0,58.0 716.0,57.5 717.0,58.0 718.0,58.0 719.0,57.5 720.0,57.5 721.0,57.5 722.0,57.0 723.0,56.5 724.0,57.0 725.0,57.0 726.0,56.0 727.0,56.0 728.0,56.0 729.0,56.5 730.0,56.5 731.0,56.5 732.0,56.5 733.0,55.5 734.0,55.5 735.0,55.5 736.0,55.5 737.0,55.5 738.0,56.0 739.0,55.0 740.0,56.0 741.0,55.5 742.0,55.0 743.0,55.0 744.0,55.5 745.0,55.5 746.0,55.5 747.0,55.0 748.0,54.5 749.0,54.5 750.0,54.0 751.0,54.0 752.0,54.0 753.0,54.0 754.0,53.0 755.0,53.0 756.0,53.0 757.0,53.0 758.0,53.5 759.0,54.0 760.0,53.5 761.0,54.0 762.0,54.0 763.0,53.5 764.0,54.0 765.0,53.5 766.0,53.5 767.0,53.5 768.0,53.0 769.0,52.5 770.0,52.5 771.0,52.5 772.0,51.0 773.0,51.0 774.0,51.5 775.0,51.5 776.0,50.0 777.0,50.0 778.0,50.5 779.0,50.0 780.0,50.0 781.0,50.5 782.0,50.5 783.0,49.5 784.0,50.0 785.0,49.5 786.0,50.0 787.0,49.5 788.0,49.5 789.0,49.5 790.0,50.0 791.0,50.0 792.0,50.5 793.0,50.5 794.0,50.5 795.0,51.5 796.0,51.5 797.0,51.0 798.0,51.0 799.0,52.0 800.0,51.5 801.0,51.5 802.0,51.5 803.0,52.0 804.0,52.0 805.0,52.5 806.0,52.0 807.0,52.0 808.0,52.0 809.0,52.5 810.0,52.5 811.0,53.0 812.0,52.5 813.0,52.5 814.0,52.0 815.0,52.0 816.0,52.0 817.0,52.5 818.0,52.5 819.0,52.0 820.0,52.0 821.0,52.0 822.0,52.5 823.0,52.5 824.0,52.0 825.0,52.0 826.0,52.5 827.0,52.5 828.0,51.5 829.0,52.0 830.0,52.0 831.0,51.0 832.0,51.0 833.0,51.0 834.0,51.0 835.0,50.5 836.0,50.5 837.0,50.5 838.0,50.0 839.0,50.0 840.0,49.5 841.0,50.0 842.0,49.5 843.0,49.0 844.0,49.0 845.0,48.5 846.0,48.0 847.0,47.5 848.0,48.0 849.0,48.0 850.0,48.5 851.0,48.5 852.0,49.0 853.0,50.0 854.0,49.5 855.0,49.5 856.0,49.5 857.0,49.0 858.0,49.0 859.0,48.5 860.0,48.5 861.0,48.5 862.0,48.0 863.0,48.0 864.0,48.0 865.0,47.5 866.0,47.0 867.0,47.0 868.0,46.5 869.0,46.5 870.0,46.5 871.0,46.5 872.0,46.5 873.0,46.0 874.0,46.5 875.0,46.5 876.0,46.5 877.0,46.5 878.0,46.5 879.0,46.5 880.0,46.0 881.0,46.0 882.0,46.0 883.0,45.5 884.0,45.0 885.0,46.0 886.0,46.0 887.0,45.5 888.0,45.5 889.0,45.5 890.0,45.5 891.0,45.5 892.0,43.5 893.0,44.0 894.0,44.0 895.0,43.5 896.0,42.5 897.0,42.5 898.0,42.0 899.0,42.0 900.0,42.5 901.0,42.5 902.0,43.0" fill="none" stroke="#000" stroke-width="1.3" stroke-linejoin="miter"/></svg>
</body></html>
